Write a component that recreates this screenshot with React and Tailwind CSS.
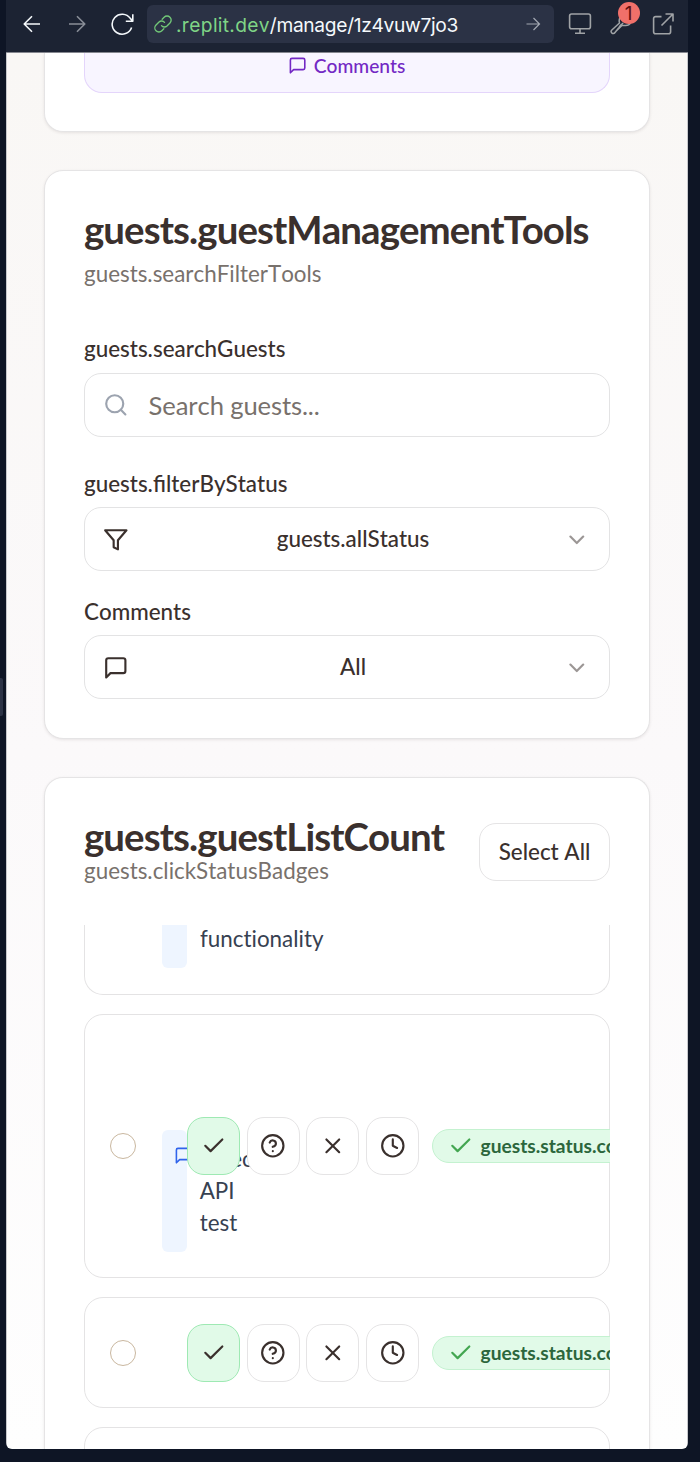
import React from "react";

const shapes = {
  message: <path d="M21 15a2 2 0 0 1-2 2H7l-4 4V5a2 2 0 0 1 2-2h14a2 2 0 0 1 2 2z" />,
  search: (<><circle cx="11" cy="11" r="8" /><path d="m21 21-4.3-4.3" /></>),
  filter: <polygon points="22 3 2 3 10 12.46 10 19 14 21 14 12.46 22 3" />,
  chevron: <path d="m6 9 6 6 6-6" />,
  check: <path d="M20 6 9 17l-5-5" />,
  help: (<><circle cx="12" cy="12" r="10" /><path d="M9.09 9a3 3 0 0 1 5.83 1c0 2-3 3-3 3" /><path d="M12 17h.01" /></>),
  x: <path d="M18 6 6 18M6 6l12 12" />,
  clock: (<><circle cx="12" cy="12" r="10" /><path d="M12 6v6l4 2" /></>),
};

function Icon({ name, className }) {
  return (
    <svg viewBox="0 0 24 24" fill="none" stroke="currentColor" strokeWidth="2" strokeLinecap="round" strokeLinejoin="round" className={"shrink-0 " + className}>
      {shapes[name]}
    </svg>
  );
}

function ThinIcon({ className, children }) {
  return (
    <svg viewBox="0 0 24 24" fill="none" stroke="currentColor" strokeWidth="1.6" strokeLinejoin="round" className={"h-6 w-6 shrink-0 " + className}>
      {children}
    </svg>
  );
}

function Toolbar() {
  return (
    <header className="flex h-[53px] shrink-0 items-start border-b border-[#85878f] bg-[#1c2333] pt-[5px] pl-[14px]">
      <div className="flex h-[38px] items-center">
        <ThinIcon className="text-[#f5f9fc]"><path d="M20 12H4.5M12 4.2 4.2 12l7.800 7.800" /></ThinIcon>
        <ThinIcon className="ml-[21px] text-[#898e98]"><path d="M4 12h15.500M12 4.200 19.800 12 12 19.800" /></ThinIcon>
        <ThinIcon className="ml-[21px] text-[#f5f9fc]"><path d="M21.600 15.500A10 10 0 1 1 20.300 6.400L22.800 9.200M22.800 2.200v7h-7" /></ThinIcon>
      </div>
      <div className="ml-[13px] flex h-[38px] w-[407px] items-center rounded-[6px] bg-[#2b3245] pr-[12px] pl-[7px]">
        <svg viewBox="0 0 24 24" fill="none" stroke="currentColor" strokeWidth="1.800" strokeLinecap="round" className="h-[18px] w-[18px] shrink-0 text-[#72c878]">
          <path d="M10 14.200a5 5 0 0 0 7.300.5l4-4A5.300 5.300 0 0 0 13.500 3l-2.600 2.600" />
          <path d="M14 9.800a5 5 0 0 0-7.300-.5l-4 4A5.300 5.300 0 0 0 10.500 21l2.600-2.600" />
        </svg>
        <span className="ml-[4px] flex-1 pt-px font-[Inter,'Noto_Sans',sans-serif] text-[19.200px] leading-[38px] tracking-[-0.320px] whitespace-nowrap text-[#f5f9fc]">
          <span className="tracking-[0.300px] text-[#7fd486]">.replit.dev</span>/manage/1z4vuw7jo3
        </span>
        <svg viewBox="0 0 18 18" fill="none" stroke="currentColor" strokeWidth="1.200" className="h-[18px] w-[18px] shrink-0 text-[#a3a8b2]"><path d="M2.500 9h13M9.500 3l6 6-6 6" /></svg>
      </div>
      <div className="ml-[14px] flex h-[38px] items-center text-[#a0a3a6]">
        <ThinIcon><rect x="1.600" y="2" width="20.800" height="14.800" rx="2" /><path d="M12 17v4M7 21.200h10" /></ThinIcon>
        <div className="relative ml-[17.500px] flex">
          <ThinIcon><path d="M13.200 11.200 10.700 13 9 15.500l-4.200 5.200a1.900 1.900 0 0 1-3.200-2.500L9.500 11A7 7 0 0 1 13 3M6.500 18.800l5.200-5.200h4a6 6 0 0 0 5-3" strokeWidth="1.500" /></ThinIcon>
          <span className="absolute -top-[10px] left-[8px] flex h-[22px] w-[22px] items-center justify-center rounded-full bg-[#f0706a] font-[Inter,sans-serif] text-[19px] leading-none text-[#5f0f10]">1</span>
        </div>
        <ThinIcon className="ml-[17px]"><path d="M10.500 4.600H4.600a2 2 0 0 0-2 2v13.200a2 2 0 0 0 2 2h13a2 2 0 0 0 2-2V13.500M14.500 2h7.500v7.500M22 2 10.500 13.500" /></ThinIcon>
      </div>
    </header>
  );
}

function Card({ className, children }) {
  return <section className={"shrink-0 border border-[#e5e4e5] bg-white px-[39px] shadow-[0_1px_3px_rgba(60,40,40,0.100)] " + className}>{children}</section>;
}

function Title({ children }) {
  return <h2 className="text-[38.400px] leading-[38px] font-bold tracking-[-0.900px] whitespace-nowrap">{children}</h2>;
}

function Select({ icon, children }) {
  return (
    <button className="mt-[7px] flex h-[64px] w-full items-center rounded-[17px] border border-[#e3e3e4] bg-white pr-[19px] pl-[18px] font-medium">
      <Icon name={icon} className="mt-px h-[25.600px] w-[25.600px]" />
      <span className="flex-1 pl-[13px] text-center">{children}</span>
      <Icon name="chevron" className="mt-px h-[25.600px] w-[25.600px] opacity-50" />
    </button>
  );
}

function GuestActions() {
  return (
    <>
      <div className="relative flex shrink-0 gap-[6.400px]">
        {["check", "help", "x", "clock"].map((name) => (
          <button key={name} className={"flex h-[58px] w-[53.200px] items-center justify-center rounded-[17px] border " + (name === "check" ? "border-[#9ee9b3] bg-[#e1fae8]" : "border-[#e5e4e5] bg-white")}>
            <Icon name={name} className="h-[25.600px] w-[25.600px]" />
          </button>
        ))}
      </div>
      <span className="ml-[13px] flex h-[34px] shrink-0 items-center rounded-full border border-[#c4f2d0] bg-[#e1fae8] px-[15.500px] text-[19.200px] font-bold text-[#2c663c]">
        <Icon name="check" className="mr-[6.500px] h-[25.600px] w-[25.600px] text-[#43a651]" />
        guests.status.confirmed
      </span>
    </>
  );
}

function GuestRow({ comment, className }) {
  return (
    <div className={"flex shrink-0 items-center rounded-[19px] border border-[#e4e3e4] pl-[25px] " + className}>
      <span className="mr-[26px] h-[26px] w-[26px] shrink-0 rounded-full border border-[#c9b79f]" />
      <div className="w-[25px] shrink-0">
        {comment && (
          <div className="mt-[90px] flex h-[122px] items-start rounded-[6px] bg-[#eef5ff] pt-[13px] pl-[13px] text-[#374151]">
            <Icon name="message" className="mt-[3px] -ml-[1.500px] h-[19.200px] w-[19.200px] text-[#2f63eb]" />
            <p className="ml-[7px] w-[60px] shrink-0 leading-[32px]">{comment}</p>
          </div>
        )}
      </div>
      <GuestActions />
    </div>
  );
}

export default function App() {
  return (
    <div className="relative h-[1462px] w-[700px] overflow-hidden bg-[#0e1525] pl-[6px] font-[Lato,sans-serif] text-[22.400px] leading-[32px] text-[#3a302d] [font-kerning:none]">
      <span className="absolute top-[678px] left-0 h-[38px] w-[3px] rounded-r-[2px] bg-[#2b3245]" />
      <div className="flex h-[1449px] w-[682px] flex-col overflow-hidden rounded-b-[6px]">
        <Toolbar />
        <main className="flex min-h-0 flex-1 flex-col overflow-hidden border-x border-[#c7c8cc] bg-linear-to-b from-[#f9f7f5] via-[#fbf9fa] to-[#fefefe] px-[37px]">
          <Card className="h-[79px] rounded-b-[19px] border-t-0">
            <button className="flex h-[40px] w-full items-start justify-center rounded-b-[18px] border border-t-0 border-[#e4d5fb] bg-[#f8f5ff] text-[19.200px] leading-[26px] font-medium text-[#7328c4]">
              <Icon name="message" className="mt-[3px] mr-[7px] -ml-px h-[19.200px] w-[19.200px]" />
              Comments
            </button>
          </Card>

          <Card className="mt-[38px] h-[569px] rounded-[19px] pt-[39px]">
            <Title>guests.guestManagement<span className="tracking-[-5px]">T</span>ools</Title>
            <p className="mt-[10px] text-[#78716c]">guests.searchFilterTools</p>
            <p className="mt-[43px] font-medium">guests.searchGuests</p>
            <div className="mt-[8px] flex h-[64px] items-center rounded-[17px] border border-[#e3e3e4] pl-[18px] text-[25.600px] tracking-[-0.120px] text-[#78716c]">
              <Icon name="search" className="mr-[20px] h-[25.600px] w-[25.600px] text-[#9ca3af]" />
              Search guests...
            </div>
            <p className="mt-[31px] font-medium">guests.filterByStatus</p>
            <Select icon="filter">guests.allStatus</Select>
            <p className="mt-[25px] font-medium">Comments</p>
            <Select icon="message">All</Select>
          </Card>

          <Card className="mt-[38px] h-[672px] rounded-t-[19px] border-b-0 pt-[39px]">
            <div className="flex h-[108px] items-start justify-between">
              <div>
                <Title>guests.guestListCount</Title>
                <p className="text-[#78716c]">guests.clickStatusBadges</p>
              </div>
              <button className="mt-[6px] h-[58px] w-[131px] rounded-[17px] border border-[#e5e4e5] font-medium whitespace-nowrap">Select All</button>
            </div>
            <div className="flex h-[524px] flex-col gap-[19px] overflow-hidden">
              <div className="flex h-[70px] shrink-0 items-start rounded-b-[19px] border border-t-0 border-[#e4e3e4] pl-[77px] text-[#374151]">
                <span className="h-[43px] w-[25px] rounded-b-[6px] bg-[#eef5ff]" />
                <span className="-mt-[2px] ml-[13px] [font-variant-ligatures:none]">functionality</span>
              </div>
              <GuestRow comment="Direct API test" className="h-[264px]" />
              <GuestRow className="h-[111px]" />
              <div className="h-[111px] shrink-0 rounded-[19px] border border-[#e4e3e4]" />
            </div>
          </Card>
        </main>
      </div>
    </div>
  );
}
